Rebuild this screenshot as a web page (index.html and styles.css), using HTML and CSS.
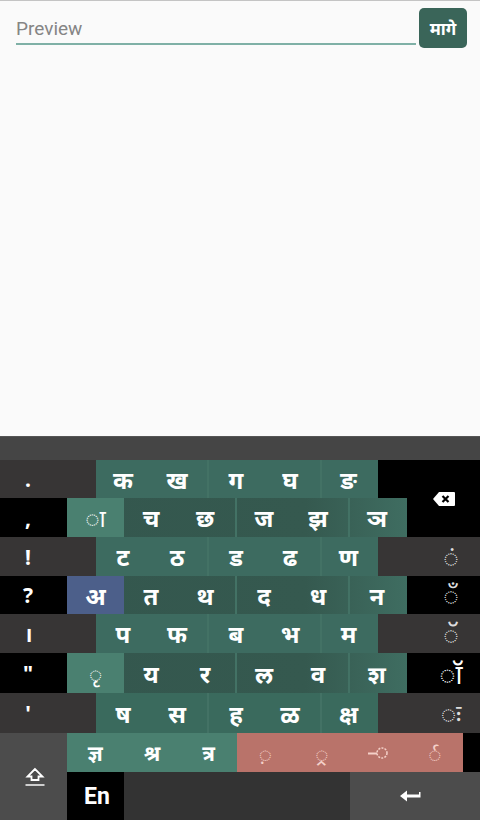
FILE: index.html
```html
<!DOCTYPE html>
<html lang="mr">

<head>
	<meta charset="UTF-8">
	<meta name="viewport" content="width=device-width, initial-scale=1.0">
	<title>Preview</title>
	<link rel="stylesheet" href="styles.css">
</head>

<body>
	<div class="top-area">
		<div class="preview-bar">
			<div class="preview-input">Preview</div>
			<button class="back-button">मागे</button>
		</div>
	</div>

	<div class="keyboard">
		<div class="kb-strip"></div>

		<!-- row 1 -->
		<div class="side dark col-left-wide">.</div>
		<div class="keys col-mid">
			<div class="cluster"><span>क</span><span>ख</span></div>
			<div class="cluster"><span>ग</span><span>घ</span></div>
			<div class="cluster single"><span>ङ</span></div>
		</div>
		<div class="side black col-gap-right"></div>
		<div class="side black backspace">
			<svg width="24" height="16" viewBox="0 0 24 16">
				<path d="M7 1h15a1 1 0 0 1 1 1v12a1 1 0 0 1-1 1H7L1 8z" fill="#fff" />
				<path d="M10.500 5l6 6M16.500 5l-6 6" stroke="#000" stroke-width="2.200" fill="none" />
			</svg>
		</div>

		<!-- row 2 -->
		<div class="side black col-left">,</div>
		<div class="keys even col-long">
			<div class="cluster matra"><span>◌ा</span></div>
			<div class="cluster"><span>च</span><span>छ</span></div>
			<div class="cluster"><span>ज</span><span>झ</span></div>
			<div class="cluster single"><span>ञ</span></div>
		</div>

		<!-- row 3 -->
		<div class="side dark col-left-wide">!</div>
		<div class="keys col-mid">
			<div class="cluster"><span>ट</span><span>ठ</span></div>
			<div class="cluster"><span>ड</span><span>ढ</span></div>
			<div class="cluster single"><span>ण</span></div>
		</div>
		<div class="side dark col-right-wide sign">◌ं</div>

		<!-- row 4 -->
		<div class="side black col-left">?</div>
		<div class="keys even col-long">
			<div class="cluster vowel"><span>अ</span></div>
			<div class="cluster"><span>त</span><span>थ</span></div>
			<div class="cluster"><span>द</span><span>ध</span></div>
			<div class="cluster single"><span>न</span></div>
		</div>
		<div class="side black col-right sign">◌ँ</div>

		<!-- row 5 -->
		<div class="side dark col-left-wide">।</div>
		<div class="keys col-mid">
			<div class="cluster"><span>प</span><span>फ</span></div>
			<div class="cluster"><span>ब</span><span>भ</span></div>
			<div class="cluster single"><span>म</span></div>
		</div>
		<div class="side dark col-right-wide sign">◌ॅ</div>

		<!-- row 6 -->
		<div class="side black col-left">"</div>
		<div class="keys even col-long">
			<div class="cluster matra"><span class="small">◌ृ</span></div>
			<div class="cluster"><span>य</span><span>र</span></div>
			<div class="cluster"><span>ल</span><span>व</span></div>
			<div class="cluster single"><span>श</span></div>
		</div>
		<div class="side black col-right sign big">◌ॉ</div>

		<!-- row 7 -->
		<div class="side dark col-left-wide">'</div>
		<div class="keys solid col-mid">
			<div class="cluster"><span>ष</span><span>स</span></div>
			<div class="cluster"><span>ह</span><span>ळ</span></div>
			<div class="cluster single"><span>क्ष</span></div>
		</div>
		<div class="side dark col-right-wide sign">◌ः</div>

		<!-- row 8 -->
		<div class="side shift">
			<svg width="20" height="20" viewBox="0 0 20 20">
				<path d="M10 2L2.500 9.500H6.500V13H13.500V9.500H17.500Z" fill="none" stroke="#fff" stroke-width="1.800" />
				<path d="M0.500 18H19.500" stroke="#ddd" stroke-width="1.800" />
			</svg>
		</div>
		<div class="keys conjuncts">
			<span>ज्ञ</span><span>श्र</span><span>त्र</span>
		</div>
		<div class="keys extras">
			<span>◌़</span><span>◌्र</span>
			<span>
				<svg width="22" height="14" viewBox="0 0 22 14">
					<circle cx="15" cy="7" r="5" fill="none" stroke="#f4d0c8" stroke-width="1.500" stroke-dasharray="2 1.200" />
					<path d="M1 7.500H10" stroke="#f4d0c8" stroke-width="2" />
				</svg>
			</span>
			<span>र्◌</span>
		</div>
		<div class="side black col-tail"></div>

		<!-- row 9 -->
		<div class="bottom-row">
			<div class="side black lang">En</div>
			<div class="side space"></div>
			<div class="side enter">
				<svg width="22" height="14" viewBox="0 0 22 14">
					<path d="M1 7L8 1.500V5.500H20V3H21.500V8.500H8V12.500Z" fill="#fff" />
				</svg>
			</div>
		</div>
	</div>
</body>

</html>
```

FILE: styles.css
```css
body {
	margin: 0;
	width: 480px;
	height: 820px;
	overflow: hidden;
	background-color: #fafafa;
	font-family: "Noto Sans", "Noto Sans Devanagari", "DejaVu Sans", sans-serif;
}

.top-area {
	height: 436px;
	border-top: 1px solid #c4c4c4;
	box-sizing: border-box;
}

.preview-bar {
	display: flex;
	align-items: flex-start;
	padding: 7px 13px 0 16px;
}

.preview-input {
	width: 400px;
	height: 37px;
	box-sizing: border-box;
	padding-top: 9px;
	border-bottom: 2px solid #7fb0a6;
	font-family: Roboto, sans-serif;
	font-size: 19px;
	line-height: 24px;
	color: #858585;
}

.back-button {
	width: 48px;
	height: 40px;
	margin-left: 3px;
	padding: 0;
	border: none;
	border-radius: 5px;
	background-color: #3a6559;
	color: #fff;
	font-family: inherit;
	font-size: 17px;
	font-weight: 700;
}

/* --- Keyboard grid --- */
.keyboard {
	height: 384px;
	display: grid;
	grid-template-columns: 67px 29px 141px 141px 29px 56px 17px;
	grid-template-rows: 24px 38px 39px 39px 38px 39px 40px 40px 39px 48px;
	background-color: #333;
	color: #fff;
}

.kb-strip {
	grid-column: 1 / -1;
	background: #454545;
	border-top: 1px solid #555;
}

.side {
	display: flex;
	align-items: center;
	justify-content: center;
	font-size: 21px;
	font-weight: 700;
}

.dark {
	background-color: #373535;
}

.black {
	background-color: #000;
}

.col-left-wide {
	grid-column: 1 / 3;
	padding-right: 40px;
}

.col-left {
	grid-column: 1 / 2;
	padding-right: 11px;
}

.col-mid {
	grid-column: 3 / 5;
}

.col-long {
	grid-column: 2 / 6;
}

.col-gap-right {
	grid-column: 5 / 6;
}

.col-right-wide {
	grid-column: 5 / 8;
	padding-left: 44px;
}

.col-right {
	grid-column: 6 / 8;
	padding-left: 15px;
}

.backspace {
	grid-column: 6 / 8;
	grid-row: 2 / 4;
}

.sign {
	color: #ddd;
	font-size: 26px;
	font-weight: 400;
}

.sign.big {
	font-size: 27px;
	color: #fff;
}

/* --- Letter keys --- */
.keys {
	display: flex;
	background-color: #3d6b60;
	font-size: 24px;
	font-weight: 700;
}

.keys.even {
	background: linear-gradient(90deg, #34574e 0%, #35594f 70%, #3f6d61 100%);
}

.keys.solid {
	background-color: #3a6a5d;
}

.cluster {
	flex: 0 0 113px;
	display: flex;
	padding-right: 3px;
	border-right: 2px solid #437265;
	box-sizing: border-box;
}

.cluster.single {
	flex: 1;
	border-right: none;
}

.cluster span,
.conjuncts span,
.extras span {
	flex: 1;
	display: flex;
	align-items: center;
	justify-content: center;
}

.cluster.matra,
.cluster.vowel {
	flex: 0 0 57px;
	padding-right: 0;
	border-right: none;
}

.cluster.matra {
	background-color: #4a8070;
	font-weight: 400;
}

.cluster.vowel {
	background-color: #4c5f8a;
}

.small {
	font-size: 22px;
}

.conjuncts {
	grid-column: 2 / 4;
	background-color: #4a8070;
	font-size: 21px;
}

.extras {
	grid-column: 4 / 7;
	background-color: #b9736a;
	color: #f4d0c8;
	font-size: 22px;
	font-weight: 400;
}

.col-tail {
	grid-column: 7 / 8;
}

/* --- Bottom rows --- */
.shift {
	grid-column: 1 / 2;
	grid-row: 9 / 11;
	padding-left: 3px;
	background-color: #4c4c4c;
}

.bottom-row {
	grid-column: 2 / 8;
	display: flex;
}

.lang {
	flex: 0 0 57px;
	padding-left: 3px;
	box-sizing: border-box;
	font-family: Roboto, sans-serif;
	font-size: 23px;
}

.space {
	flex: 1;
}

.enter {
	flex: 0 0 130px;
	padding-right: 10px;
	box-sizing: border-box;
	background-color: #4c4c4c;
}
```
